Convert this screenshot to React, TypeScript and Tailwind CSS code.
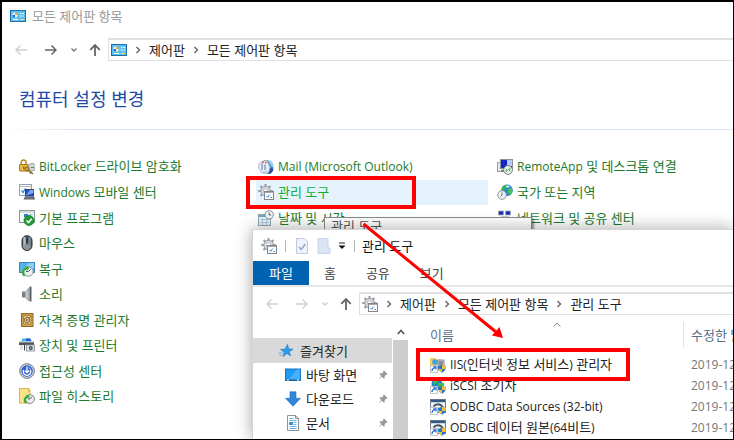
import React from "react";

type IconProps = { children: React.ReactNode };

const Icon = ({ children }: IconProps) => (
  <svg viewBox="0 0 16 16" className="size-4 shrink-0" fill="none" aria-hidden="true">
    {children}
  </svg>
);

// Latin runs are set a step smaller than the Hangul around them
const Label = ({ text }: { text: string }) => (
  <span>
    {text.split(/([A-Za-z0-9()-]+(?: [A-Za-z0-9()-]+)*)/).map((part, i) =>
      i % 2 === 1 ? (
        <span key={i} className="text-[12px]">
          {part}
        </span>
      ) : (
        part
      ),
    )}
  </span>
);

const ControlPanelIcon = () => (
  <Icon>
    <rect x="0.5" y="2.5" width="15" height="11" fill="#5cc0f2" stroke="#1c6fa8" />
    <circle cx="5" cy="7" r="2.6" fill="#eaf7ff" />
    <path d="M5 7V4.4A2.6 2.6 0 0 1 7.6 7Z" fill="#f0a020" />
    <path d="M5 7H2.4A2.6 2.6 0 0 0 5 9.6Z" fill="#1c6fd0" />
    <path d="M10 5.5h1M12 5.5h2M10 8h2M13 8h1" stroke="#fff" />
    <path d="M3 11.5h5" stroke="#fff" />
    <path d="M10 11.5h4" stroke="#ffd34d" />
  </Icon>
);

const ToolsIcon = () => (
  <Icon>
    <path
      d="M7.500 0v14M.3 7h14.400M2.500 2l10 10M12.500 2l-10 10"
      stroke="#969ba0"
      strokeWidth="2"
    />
    <circle cx="7.500" cy="7" r="4.800" fill="#d9dcdf" stroke="#969ba0" />
    <circle cx="7.500" cy="7" r="2.400" fill="#fff" stroke="#a5aaaf" strokeWidth="0.8" />
    <rect x="6.500" y="7.500" width="9" height="8" fill="#fff" stroke="#80858b" />
    <path d="M6.500 8.500h9" stroke="#a5aab0" />
    <path d="m8.500 12 1.200 1.400 2-2.800" stroke="#2f86d8" />
    <path d="M12.500 13.500h1.500" stroke="#2f86d8" />
  </Icon>
);

const BitLockerIcon = () => (
  <Icon>
    <path d="M7 6.5 14 4l2 2v5l-6 2Z" fill="#cfd2d6" stroke="#8d9298" strokeWidth="0.7" />
    <path d="M12 8.5h3" stroke="#43a047" />
    <path d="M2.300 6V3.300a2.400 2.400 0 0 1 4.800 0V6" stroke="#b98a2b" strokeWidth="1.5" />
    <rect x="0.5" y="5.5" width="8.5" height="6.5" rx="0.5" fill="#e9b84a" stroke="#a87718" />
    <path d="M4.8 7.5v2.5" stroke="#8a5d0a" strokeWidth="1.3" />
    <circle cx="8" cy="10" r="2" stroke="#8b6b2a" strokeWidth="1.2" />
    <path d="m9.5 11 4.500 4M12 13l-1 1.500" stroke="#8b6b2a" strokeWidth="1.5" />
  </Icon>
);

const MobilityIcon = () => (
  <Icon>
    <rect x="0.5" y="0.5" width="12" height="11" fill="#f6f8fa" stroke="#9aa3ab" />
    <path d="M1 2.5h11" stroke="#b7bec5" />
    <path d="m2.500 6.500 1.500 2 2.500-4" stroke="#2978d0" strokeWidth="1.2" />
    <rect x="6.5" y="5.5" width="8" height="6.5" fill="#1d50d4" stroke="#3a4250" />
    <path d="m7 11.500 4-5.500h3.500V9Z" fill="#79a9f5" />
    <path d="M6 12.500h9l1 3H4.500Z" fill="#555d6b" />
    <path d="M6.500 14h8" stroke="#a6adba" strokeDasharray="1 1" />
  </Icon>
);

const DefaultsIcon = () => (
  <Icon>
    <rect x="0.5" y="0.5" width="15" height="12" fill="#f7f9fa" stroke="#8d959c" />
    <path d="M1 2h14" stroke="#b4bbc1" />
    <rect x="5" y="4" width="4" height="3" fill="#2f80d0" />
    <path d="M10 4.500h4M10 6.500h3" stroke="#9cc3ea" />
    <circle cx="10" cy="10.5" r="5" fill="#1f9a32" stroke="#0d7420" strokeWidth="0.7" />
    <path d="m7.500 10.500 2 2 3.200-3.800" stroke="#fff" strokeWidth="1.6" />
  </Icon>
);

const MouseIcon = () => (
  <Icon>
    <rect x="3" y="0.7" width="10" height="14.8" rx="4.8" fill="#5a6068" stroke="#2b2f35" />
    <rect x="4.3" y="2" width="2.4" height="11" rx="1.2" fill="#b8bec6" />
    <rect x="9.6" y="2" width="2" height="11" rx="1" fill="#868d96" />
    <rect x="7" y="2.5" width="2" height="5.5" rx="1" fill="#17395f" />
    <path d="M5 9.500h6v2.500a3 3 0 0 1-6 0Z" fill="#8d949d" />
  </Icon>
);

const RecoveryIcon = () => (
  <Icon>
    <rect x="0.5" y="1.5" width="15" height="10" fill="#54b0ee" stroke="#3a87bd" />
    <path d="M1 11 10 2h5v5Z" fill="#8fd0fa" />
    <circle cx="9.5" cy="10.5" r="4.7" fill="#eef0f1" stroke="#84898e" />
    <path d="M9.500 10.500 12 8M9.500 10.500H7" stroke="#555b61" />
    <path d="M5 15.500C1.500 13 2 8 6.500 6.500L6 5l4.500 1.500L8 10l-.6-1.600C4.500 9.500 4.200 12.500 6.500 14.500Z" fill="#2fae3c" />
  </Icon>
);

const SoundIcon = () => (
  <Icon>
    <path d="M3 5.500h3v6H3Z" fill="#7c8187" />
    <path d="M6 5.500 10.500 1v15L6 11.500Z" fill="#a9aeb3" />
    <path d="M10.500.8 12.500.5v15l-2-.3Z" fill="#5c6167" />
    <path d="M8 5v7" stroke="#d8dbde" />
  </Icon>
);

const CredentialIcon = () => (
  <Icon>
    <rect x="2.500" y="1.500" width="11.500" height="13" fill="#cfa24a" stroke="#8a6a26" />
    <rect x="4.500" y="3.500" width="7.500" height="8.500" fill="#e2c27d" stroke="#9c7a33" strokeWidth="0.7" />
    <circle cx="8" cy="8" r="2.5" fill="#f4e7c4" stroke="#6f5a2b" />
    <circle cx="8" cy="8" r="0.9" fill="#5c4a22" />
    <path d="m10 6 1.500-1.500" stroke="#6f5a2b" />
  </Icon>
);

const PrinterIcon = () => (
  <Icon>
    <path d="M3.500 1.500h8l1.500 3H2Z" fill="#3fb8e8" />
    <path d="M7 1.500h4l1 2.500H7Z" fill="#2c57d8" />
    <path d="M0 5h15v3H0Z" fill="#50565e" />
    <path d="M0 5h15" stroke="#b9bec4" />
    <path d="M1 8h3v5H1Z" fill="#e0e3e6" />
    <path d="M5.500 8v5.500" stroke="#3b4047" />
    <rect x="7.500" y="8" width="8" height="6" fill="#e4e7ea" stroke="#80868d" strokeWidth="0.8" />
    <circle cx="11.800" cy="11" r="2" fill="#3c4550" />
    <circle cx="11.800" cy="11" r="0.8" fill="#9fd0f0" />
  </Icon>
);

const AccessIcon = () => (
  <Icon>
    <circle cx="8" cy="8" r="7.4" fill="#c4c9d0" stroke="#7f868f" />
    <circle cx="8" cy="8" r="5.7" fill="#2c5fce" />
    <path d="M4.500 7a3.800 3.800 0 1 0 7 0" stroke="#fff" strokeWidth="1.3" />
    <path d="M8 3.500v6M5.800 7.500 8 9.700l2.200-2.200" stroke="#fff" strokeWidth="1.3" />
    <path d="M9.800 4.500 12 6.500" stroke="#dbe6ff" />
  </Icon>
);

const FileHistoryIcon = () => (
  <Icon>
    <path d="M.5.5h9l1.500 1.500v13H.5Z" fill="#fbe187" stroke="#dcb650" />
    <path d="M9.500.5v3H11" stroke="#dcb650" />
    <circle cx="11" cy="11" r="4.4" fill="#eceeef" stroke="#80868c" />
    <path d="M11 11 13 8.500M11 11H9" stroke="#555b61" />
    <path d="M6.500 15.500C4 13.500 4 9.500 7.500 8L7 6.500l4 1.500-2 3-.6-1.300C6.500 10.800 6.500 13 8 14.500Z" fill="#2fae3c" />
  </Icon>
);

const MailIcon = () => (
  <Icon>
    <circle cx="8.500" cy="8" r="7" fill="#3f8ac8" />
    <path d="M9 1c4 0 7 3 6.500 7.500C13 8 12.500 5 9 1Z" fill="#9bd0ee" />
    <path d="M10 15c3 0 5-2 5.500-5l-4-1Z" fill="#2a4a9a" />
    <path d="M1 4.500 8.500 1 12 8l-1 5-7 .5L.5 9Z" fill="#e8edf5" stroke="#9aa4b5" strokeWidth="0.7" />
    <path d="M4 5v6M7 5.500v5.500" stroke="#5574b8" />
    <path d="M4 3.500h1.500M7 3.500h1.500" stroke="#e03c31" strokeWidth="1.3" />
    <path d="M2 13c2.500 2.500 6 2.500 8.500 1l-1-2Z" fill="#c7cbd8" />
  </Icon>
);

const DateIcon = () => (
  <Icon>
    <rect x="0.5" y="4.5" width="12" height="11" fill="#eef4f8" stroke="#8fa3b1" />
    <path d="M1 6h11" stroke="#6aa7cd" strokeWidth="2" />
    <path d="M2 9.500h9M2 12.500h9M4.500 8v7M8.500 8v7" stroke="#9dbfd3" strokeWidth="0.8" />
    <circle cx="11.200" cy="4.800" r="4.2" fill="#f5f6f7" stroke="#858c93" />
    <path d="M11.200 2.300v2.700h2" stroke="#5a6168" />
  </Icon>
);

const RemoteAppIcon = () => (
  <Icon>
    <rect x="0.5" y="3.5" width="6" height="9" fill="#e4e6ea" stroke="#9a9fa6" />
    <rect x="3.5" y="0.5" width="12" height="9" fill="#1426c8" stroke="#8b9098" />
    <path d="M10 1h5v6l-5 2Z" fill="#b8cdf6" />
    <path d="M4 11h6v2H4Z" fill="#777e87" />
    <circle cx="11" cy="11" r="4.4" fill="#e7f2e6" stroke="#7b8288" />
    <path d="m8.500 10 2 1.500-2 1.500M13.500 9l-2 1.500 2 1.500" stroke="#2e9e35" />
  </Icon>
);

const RegionIcon = () => (
  <Icon>
    <circle cx="10" cy="6.300" r="5.8" fill="#2a86d8" />
    <path d="M5.500 3C7 1 9 .5 10.500.8L11 3 8 5 6.500 8.500 4.500 7Z" fill="#35b44a" />
    <path d="m11 5 4-1c1 2.500.5 5-1.500 7L11 9Z" fill="#49c05c" />
    <path d="M8.500 2C10 1 12 1.500 13 2.500L10.500 4Z" fill="#cdeefb" />
    <circle cx="5" cy="11" r="4.3" fill="#eef1f4" stroke="#8f979f" />
    <path d="M5 8.500V11l-1.500 1.500" stroke="#5c646c" />
  </Icon>
);

const NetworkIcon = () => (
  <Icon>
    <rect x="1.500" y="1" width="5" height="4" fill="#1a2fae" stroke="#a9afb8" strokeWidth="0.7" />
    <rect x="8.500" y="1" width="5" height="4" fill="#1a2fae" stroke="#a9afb8" strokeWidth="0.7" />
    <path d="M4 6h8v5H4Z" fill="#c8cdd4" />
  </Icon>
);

const StarIcon = () => (
  <Icon>
    <path
      d="m9.500 1.500 1.200 4.300 4.300.4-3.600 2.500 1.100 4.300L9 10.500l-4 3 1.200-4.500L2.500 6.500l4.500-.4Z"
      fill="#2f9ae6"
      stroke="#1879c4"
      strokeWidth="0.6"
    />
    <path d="M.5 10h4M1.500 12.500h3" stroke="#64b5f0" />
  </Icon>
);

const DesktopIcon = () => (
  <Icon>
    <rect x="0.5" y="2" width="15" height="11.5" fill="#1e9bf0" stroke="#1677c0" />
    <path d="M3 13 12 2.500h3V13Z" fill="#42b0fa" />
    <path d="M1 13h14" stroke="#0f5f9e" />
    <path d="M2 13h2M12 13h2" stroke="#fff" />
  </Icon>
);

const DownloadIcon = () => (
  <Icon>
    <path d="M5 .8h6v6.500h4.500L8 15.300.5 7.300H5Z" fill="#2f86dc" stroke="#1e6fc0" strokeWidth="0.6" />
  </Icon>
);

const DocumentIcon = () => (
  <Icon>
    <path d="M2.500.5h8l3 3v12h-11Z" fill="#fff" stroke="#8c949c" />
    <path d="M10.500.5v3h3" stroke="#8c949c" />
    <path d="M4.500 3.500h4M4.500 5.500h7M8.500 7.500h3M8.500 9.500h3M4.500 11.500h7M4.500 13.500h7" stroke="#6fb1e0" />
    <rect x="4" y="7" width="4" height="3" fill="#3c93d6" />
  </Icon>
);

const PinIcon = () => (
  <svg viewBox="0 0 10 10" className="size-[10px] shrink-0" aria-hidden="true">
    <path
      d="M5.800.3 9.700 4.200l-1 .5-.6-.1L6.600 6.200l.1 1.700-.8.8L3.900 6.700.5 9.500l2.800-3.400L1.300 4.100l.8-.8 1.700.1L5.400 1.900l-.1-.6Z"
      fill="#8f99a3"
    />
  </svg>
);

const Shortcut = () => (
  <>
    <rect x="0.5" y="8.5" width="7" height="7" fill="#fff" stroke="#b4b8bc" strokeWidth="0.8" />
    <path d="M2 14c0-2 1-3 3-3M3.300 9.800H6v2.700" stroke="#1c60c8" strokeWidth="1.2" />
  </>
);

const Shield = () => (
  <>
    <path d="M12 7.500c1.500 1 2.500 1.300 4 1.300 0 3.500-1.200 5.700-4 7-2.800-1.300-4-3.500-4-7 1.500 0 2.500-.3 4-1.300Z" fill="#2671c9" />
    <path d="M12 7.500V12h3.500c.4-1 .5-2 .5-3.200-1.500 0-2.500-.3-4-1.300ZM12 12H8.500c.6 1.800 1.700 3 3.500 3.800Z" fill="#f3c431" />
  </>
);

const IisIcon = () => (
  <Icon>
    <path d="M0 1h5l1 1.500h5V9H0Z" fill="#f6cf53" />
    <circle cx="5" cy="5" r="2.8" fill="#41a5dc" />
    <rect x="8" y="3" width="6" height="10" fill="#c9cdd2" stroke="#6f767d" strokeWidth="0.7" />
    <path d="M9 5h4M9 7h4" stroke="#4c5259" />
    <Shield />
    <Shortcut />
  </Icon>
);

const IscsiIcon = () => (
  <Icon>
    <circle cx="7" cy="6" r="5.5" fill="#1e86c8" />
    <path d="M3 3c2-2.500 4-2 6-1L7 5 4 7Z" fill="#3fb85a" />
    <path d="M8 5h6v5H8Z" fill="#3fb85a" />
    <Shield />
    <Shortcut />
  </Icon>
);

const OdbcIcon = () => (
  <Icon>
    <rect x="0.5" y="0.5" width="15" height="13" fill="#f2f5f8" stroke="#6f7c8b" />
    <path d="M1 2h14" stroke="#33587f" strokeWidth="2.4" />
    <path d="M3.500 7.500c2-3 7-3.500 9.500 1" stroke="#4c545d" strokeWidth="2" />
    <Shield />
    <Shortcut />
  </Icon>
);

const panelColumns = [
  [
    { label: "BitLocker 드라이브 암호화", icon: <BitLockerIcon /> },
    { label: "Windows 모바일 센터", icon: <MobilityIcon /> },
    { label: "기본 프로그램", icon: <DefaultsIcon /> },
    { label: "마우스", icon: <MouseIcon /> },
    { label: "복구", icon: <RecoveryIcon /> },
    { label: "소리", icon: <SoundIcon /> },
    { label: "자격 증명 관리자", icon: <CredentialIcon /> },
    { label: "장치 및 프린터", icon: <PrinterIcon /> },
    { label: "접근성 센터", icon: <AccessIcon /> },
    { label: "파일 히스토리", icon: <FileHistoryIcon /> },
  ],
  [
    { label: "Mail (Microsoft Outlook)", icon: <MailIcon /> },
    { label: "관리 도구", icon: <ToolsIcon />, active: true },
    { label: "날짜 및 시간", icon: <DateIcon /> },
  ],
  [
    { label: "RemoteApp 및 데스크톱 연결", icon: <RemoteAppIcon /> },
    { label: "국가 또는 지역", icon: <RegionIcon /> },
    { label: "네트워크 및 공유 센터", icon: <NetworkIcon /> },
  ],
];

const favorites = [
  { label: "바탕 화면", icon: <DesktopIcon /> },
  { label: "다운로드", icon: <DownloadIcon /> },
  { label: "문서", icon: <DocumentIcon /> },
];

const files = [
  { name: "IIS(인터넷 정보 서비스) 관리자", icon: <IisIcon /> },
  { name: "iSCSI 초기자", icon: <IscsiIcon /> },
  { name: "ODBC Data Sources (32-bit)", icon: <OdbcIcon /> },
  { name: "ODBC 데이터 원본(64비트)", icon: <OdbcIcon /> },
];

type AddressBarProps = {
  icon: React.ReactNode;
  path: string[];
  canGoForward?: boolean;
};

const AddressBar = ({ icon, path, canGoForward }: AddressBarProps) => (
  <nav className="flex pl-1">
    <button aria-label="뒤로" className="flex w-[30px] items-center justify-center text-[#d0d0d0]">
      <svg viewBox="0 0 12 12" className="size-3" fill="none" stroke="currentColor" strokeWidth="1.5">
        <path d="M12 6H1M5.500 1.500 1 6l4.500 4.500" />
      </svg>
    </button>
    <button
      aria-label="앞으로"
      className={`flex w-[30px] items-center justify-center ${canGoForward ? "text-[#666]" : "text-[#d0d0d0]"}`}
    >
      <svg viewBox="0 0 12 12" className="size-3" fill="none" stroke="currentColor" strokeWidth="1.5">
        <path d="M0 6h11M6.500 1.500 11 6l-4.500 4.500" />
      </svg>
    </button>
    <button
      aria-label="최근 위치"
      className={`flex w-4 items-center justify-center ${canGoForward ? "text-[#777]" : "text-[#ccc]"}`}
    >
      <svg viewBox="0 0 6 6" className="size-[6px]" fill="none" stroke="currentColor" strokeWidth="1.4">
        <path d="m.5 1.500 2.500 2.500 2.500-2.500" />
      </svg>
    </button>
    <button aria-label="위로" className="flex w-[26px] items-center justify-center text-[#666]">
      <svg viewBox="0 0 12 12" className="size-3" fill="none" stroke="currentColor" strokeWidth="1.8">
        <path d="M6 12V1M1.200 5.800 6 1l4.800 4.800" />
      </svg>
    </button>
    <div className="flex h-[23px] flex-1 items-center border-t-2 border-b border-l border-[#e0e0e0] pl-[2px] whitespace-nowrap text-[#222]">
      {icon}
      {path.map((part) => (
        <React.Fragment key={part}>
          <svg viewBox="0 0 6 8" className="mx-2 h-2 w-[6px] shrink-0" fill="none" stroke="#666" strokeWidth="1.4">
            <path d="m1.500 1 3 3-3 3" />
          </svg>
          <a href="#">{part}</a>
        </React.Fragment>
      ))}
    </div>
  </nav>
);

const ControlPanel = () => (
  <section className="flex h-full flex-col">
    <header className="flex h-7 items-center gap-[6px] pl-2 text-[#999]">
      <ControlPanelIcon />
      모든 제어판 항목
    </header>
    <div className="pt-2">
      <AddressBar icon={<ControlPanelIcon />} path={["제어판", "모든 제어판 항목"]} canGoForward />
    </div>
    <h1 className="flex h-[68px] items-center pt-2 pl-[17px] text-[18px] text-[#1c4aa6]">컴퓨터 설정 변경</h1>
    <div className="h-px shrink-0 bg-gradient-to-r from-white via-[#dbe7f3] via-10% to-[#dbe7f3]" />
    <main className="grid flex-1 grid-cols-3 gap-x-[7px] pt-6 pr-[6px] pb-[30px] pl-[15px]">
      {panelColumns.map((items, i) => (
        <ul key={i} className="grid grid-rows-10">
          {items.map((item) => (
            <li key={item.label} className={item.active ? "bg-[#e5f3ff]" : ""}>
              <a
                href="#"
                className={`flex h-full items-center gap-1 pl-[2px] whitespace-nowrap ${
                  item.active ? "text-[#10b030]" : "text-[#1b7a2b]"
                }`}
              >
                {item.icon}
                <Label text={item.label} />
              </a>
            </li>
          ))}
        </ul>
      ))}
    </main>
  </section>
);

const TitleBar = () => (
  <header className="flex h-[31px] shrink-0 items-center pl-2">
    <ToolsIcon />
    <span className="ml-2 h-3 w-px bg-[#b5b5b5]" />
    <button aria-label="속성" className="ml-2">
      <Icon>
        <path d="M2.500.5h8l3 3v12h-11Z" fill="#eef3fb" stroke="#bcc9e0" />
        <path d="m5 9 2.200 2.500L11.500 6" stroke="#8ea4cc" strokeWidth="1.4" />
      </Icon>
    </button>
    <button aria-label="새 폴더" className="ml-[6px]">
      <Icon>
        <path d="M2 .5h10V10h2v5.500H2Z" fill="#dbe4f4" stroke="#c9d5ea" />
      </Icon>
    </button>
    <button aria-label="빠른 실행 도구 모음 사용자 지정" className="ml-[6px]">
      <svg viewBox="0 0 8 8" className="size-2" fill="none">
        <path d="M1 1h6" stroke="#222" />
        <path d="M.5 3.500h7L4 7Z" fill="#111" />
      </svg>
    </button>
    <span className="mr-[7px] ml-2 h-3 w-px bg-[#b5b5b5]" />
    <span className="text-[#111]">관리 도구</span>
  </header>
);

const Sidebar = () => (
  <aside className="flex">
    <ul className="w-[139px] pt-[23px]">
      <li>
        <a href="#" className="flex h-[25px] items-center gap-[6px] bg-[#d9d9d9] pl-[25px]">
          <StarIcon />
          즐겨찾기
        </a>
      </li>
      {favorites.map((item) => (
        <li key={item.label}>
          <a href="#" className="flex h-6 items-center gap-[5px] pr-1 pl-8">
            {item.icon}
            <span className="flex-1">{item.label}</span>
            <PinIcon />
          </a>
        </li>
      ))}
    </ul>
    <div className="flex w-4 flex-col pt-2 pl-px">
      <button aria-label="위로 스크롤" className="flex h-[17px] shrink-0 items-center justify-center">
        <svg viewBox="0 0 8 6" className="h-[6px] w-2" fill="none" stroke="#555" strokeWidth="1.6">
          <path d="m.8 5 3.200-3.500L7.200 5" />
        </svg>
      </button>
      <div className="flex-1 bg-[#cdcdcd]" />
    </div>
  </aside>
);

const FileList = () => (
  <div className="min-w-0 flex-1 overflow-hidden pt-[7px] pl-[22px]">
    <table className="w-full table-fixed whitespace-nowrap">
      <thead>
        <tr className="text-left align-top text-[#5b6f87]">
          <th className="h-8 p-0 font-normal">
            <div className="relative flex h-[26px] items-center border-r border-[#e2e2e2]">
              이름
              <svg
                viewBox="0 0 8 5"
                className="absolute top-0 left-1/2 h-[5px] w-2 -translate-x-1/2"
                fill="none"
                stroke="#888"
              >
                <path d="M.5 4.500 4 1l3.500 3.500" />
              </svg>
            </div>
          </th>
          <th className="h-8 w-[49px] p-0 font-normal">
            <div className="flex h-[26px] items-center overflow-hidden pl-[7px]">수정한 날짜</div>
          </th>
        </tr>
      </thead>
      <tbody>
        {files.map((file) => (
          <tr key={file.name}>
            <td className="h-[21px] p-0">
              <a href="#" className="flex items-center gap-1">
                {file.icon}
                <Label text={file.name} />
              </a>
            </td>
            <td className="h-[21px] overflow-hidden p-0 pl-[7px] text-[12px] text-[#777]">2019-12-07</td>
          </tr>
        ))}
      </tbody>
    </table>
  </div>
);

const ExplorerWindow = () => (
  <section className="absolute top-[227px] right-0 bottom-0 left-[250px] flex flex-col overflow-hidden border-t border-l border-[#d5d5d5] bg-white shadow-[0_0_16px_rgba(0,0,0,0.35)]">
    <TitleBar />
    <div className="flex h-6 shrink-0 text-[#444]">
      <button className="bg-[#0063b1] px-4 text-white">파일</button>
      <button className="px-[15px]">홈</button>
      <button className="px-[15px]">공유</button>
      <button className="px-[15px]">보기</button>
    </div>
    <div className="shrink-0 border-t-2 border-[#e8e8e8] pt-[5px]">
      <AddressBar icon={<ToolsIcon />} path={["제어판", "모든 제어판 항목", "관리 도구"]} />
    </div>
    <div className="flex min-h-0 flex-1 text-[#222]">
      <Sidebar />
      <FileList />
    </div>
  </section>
);

const App = () => (
  <div className="relative h-screen overflow-hidden border-t-2 border-r border-b border-l-2 border-black bg-white font-['Open_Sans','Noto_Sans_CJK_KR',sans-serif] text-[13px] leading-5">
    <ControlPanel />
    <div
      role="tooltip"
      className="absolute top-[215px] left-[322px] h-6 w-[208px] border border-[#8a8a8a] bg-white pl-[6px] leading-4 text-[#575757] shadow-[2px_2px_2px_rgba(0,0,0,0.4)]"
    >
      관리 도구
    </div>
    <ExplorerWindow />

    {/* callouts */}
    <div className="absolute top-[174px] left-[244px] h-[33px] w-[170px] border-4 border-[#ff0000]" />
    <div className="absolute top-[346px] left-[414px] h-[33px] w-[214px] border-4 border-[#ff0000]" />
    <svg viewBox="0 0 142 118" className="absolute top-[220px] left-[360px] h-[118px] w-[142px]" aria-hidden="true">
      <path d="M1.500 2 134 110" stroke="#ff0000" strokeWidth="3" fill="none" />
      <path d="m141 116-11-2.500 7.500-8.500Z" fill="#ff0000" />
    </svg>
  </div>
);

export default App;
